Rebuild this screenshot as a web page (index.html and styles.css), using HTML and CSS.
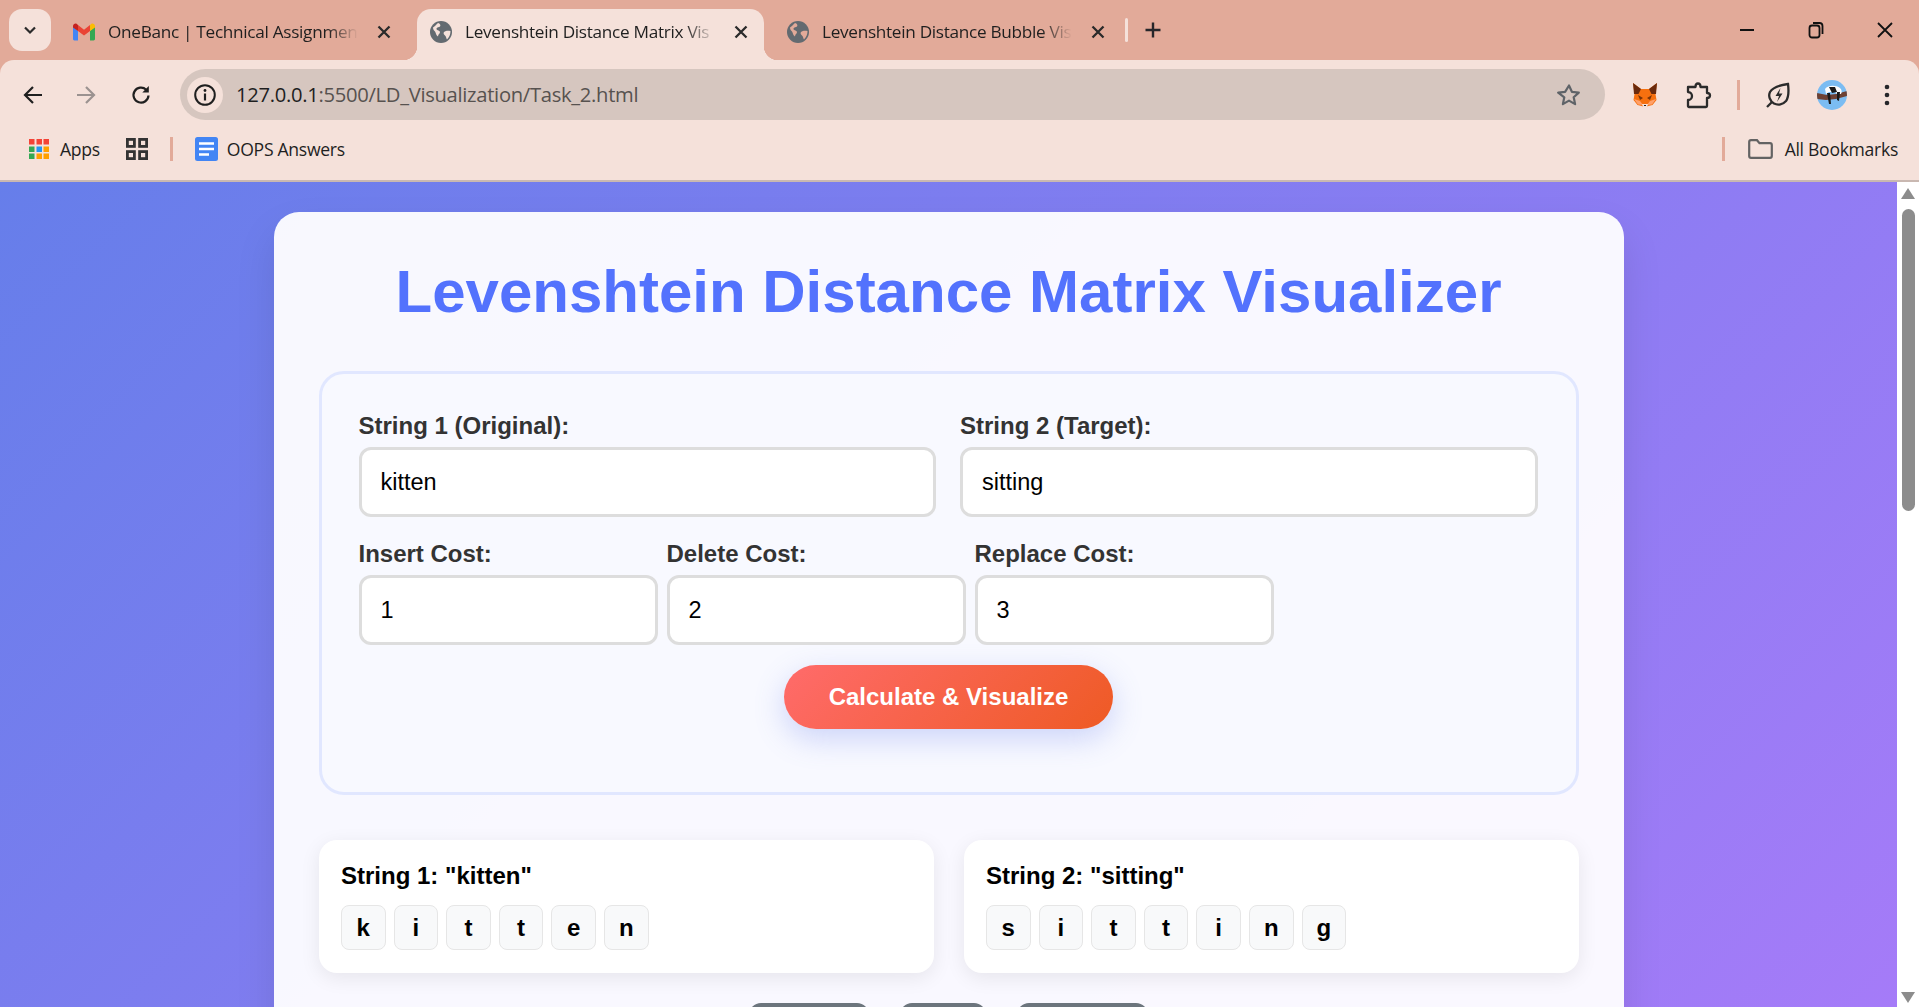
FILE: index.html
```html
<!DOCTYPE html>
<html>
<head>
    <meta charset="UTF-8">
    <title>Levenshtein Distance Matrix Visualizer</title>
    <link rel="stylesheet" href="styles.css">
</head>
<body>
<div class="chrome">
    <div class="tabstrip">
        <div class="tab-list">
            <svg width="16" height="16" viewBox="0 0 16 16"><path d="M3 5.500l5 5 5-5" fill="none" stroke="#2b2b2b" stroke-width="2.200"/></svg>
        </div>
        <div class="tab tab-first">
            <svg class="favicon" width="22" height="22" viewBox="0 0 22 22">
                <path d="M0 5.500v12.500c0 .8.6 1.400 1.400 1.400H5V10z" fill="#4285f4"/>
                <path d="M22 5.500v12.500c0 .8-.6 1.400-1.400 1.400H17V10z" fill="#34a853"/>
                <path d="M5 10l6 4.500 6-4.500V4l-6 4.800L5 4z" fill="#ea4335"/>
                <path d="M17 4v6l5-3.600V5c0-2-2.400-3-3.800-2z" fill="#fbbc04"/>
                <path d="M5 4v6L0 6.400V5c0-2 2.400-3 3.800-2z" fill="#c5221f"/>
            </svg>
            <span class="tab-title">OneBanc | Technical Assignmen</span>
            <svg class="tab-close" width="16" height="16" viewBox="0 0 16 16"><path d="M2.500 2.500l11 11M13.500 2.500l-11 11" stroke="#2a2a2a" stroke-width="2.300"/></svg>
        </div>
        <div class="tab tab-active">
            <svg class="favicon" width="22" height="22" viewBox="0 0 22 22">
                <circle cx="11" cy="11" r="11" fill="#636a70"/>
                <path d="M3 6.500c2-1 3-3 5-4.500 2 .5 3 2 2 3.500-1 1-3 .5-3.500 2-.5 2 3 1.500 3.500 3.500 0 2-2 2-2 4.500-2-1-2-3.500-3-5-1-1-2-2-2-4z" fill="#f5e1da"/>
                <path d="M14 11c2-1.500 4-1.500 6.500-1 0 3-1 6-3.500 8.500-1-1-.5-3-2-4-1-.8-2-2-1-3.500z" fill="#f5e1da"/>
            </svg>
            <span class="tab-title">Levenshtein Distance Matrix Vis</span>
            <svg class="tab-close" width="16" height="16" viewBox="0 0 16 16"><path d="M2.500 2.500l11 11M13.500 2.500l-11 11" stroke="#2a2a2a" stroke-width="2.300"/></svg>
        </div>
        <div class="tab tab-last">
            <svg class="favicon" width="22" height="22" viewBox="0 0 22 22">
                <circle cx="11" cy="11" r="11" fill="#636a70"/>
                <path d="M3 6.500c2-1 3-3 5-4.500 2 .5 3 2 2 3.500-1 1-3 .5-3.500 2-.5 2 3 1.500 3.500 3.500 0 2-2 2-2 4.500-2-1-2-3.500-3-5-1-1-2-2-2-4z" fill="#e2aa99"/>
                <path d="M14 11c2-1.500 4-1.500 6.500-1 0 3-1 6-3.500 8.500-1-1-.5-3-2-4-1-.8-2-2-1-3.500z" fill="#e2aa99"/>
            </svg>
            <span class="tab-title">Levenshtein Distance Bubble Vis</span>
            <svg class="tab-close" width="16" height="16" viewBox="0 0 16 16"><path d="M2.500 2.500l11 11M13.500 2.500l-11 11" stroke="#2a2a2a" stroke-width="2.300"/></svg>
        </div>
        <div class="tab-sep"></div>
        <svg class="new-tab" width="18" height="18" viewBox="0 0 18 18"><path d="M9 1.500v15M1.500 9h15" stroke="#26262a" stroke-width="2.400"/></svg>
        <div class="win-controls">
            <div class="win-btn"><svg width="16" height="16" viewBox="0 0 16 16"><path d="M1 8h14" stroke="#111" stroke-width="2"/></svg></div>
            <div class="win-btn"><svg width="16" height="18" viewBox="0 0 16 18"><rect x="1.500" y="4.500" width="10" height="12" rx="2.500" fill="none" stroke="#111" stroke-width="1.800"/><path d="M5 2h6.500c1.700 0 3 1.300 3 3v8" fill="none" stroke="#111" stroke-width="1.800"/></svg></div>
            <div class="win-btn"><svg width="18" height="18" viewBox="0 0 18 18"><path d="M2 2l14 14M16 2L2 16" stroke="#111" stroke-width="1.800"/></svg></div>
        </div>
    </div>

    <div class="toolbar">
        <div class="nav-btn nav-back"><svg width="22" height="22" viewBox="0 0 22 22"><path d="M20 11H3M11 3l-8 8 8 8" fill="none" stroke="#1f1f1f" stroke-width="2.200"/></svg></div>
        <div class="nav-btn nav-fwd"><svg width="22" height="22" viewBox="0 0 22 22"><path d="M2 11h17M11 3l8 8-8 8" fill="none" stroke="#9b9290" stroke-width="2.200"/></svg></div>
        <div class="nav-btn nav-reload"><svg width="22" height="22" viewBox="0 0 22 22"><path d="M18.500 11.500a7.500 7.500 0 1 1-2.300-5.800" fill="none" stroke="#1f1f1f" stroke-width="2.200"/><path d="M18.800 2v6.500h-6.500z" fill="#1f1f1f"/></svg></div>
        <div class="omnibox">
            <div class="site-info"><svg width="24" height="24" viewBox="0 0 24 24"><circle cx="12" cy="12" r="9.800" fill="none" stroke="#1f1f1f" stroke-width="2"/><path d="M12 10.500v7" stroke="#1f1f1f" stroke-width="2.200"/><circle cx="12" cy="7.500" r="1.400" fill="#1f1f1f"/></svg></div>
            <span class="url"><span class="url-host">127.0.0.1</span>:5500/LD_Visualization/Task_2.html</span>
            <svg class="star" width="24" height="24" viewBox="0 0 24 24"><path d="M12 2.500l2.900 6.300 6.900.8-5.100 4.700 1.400 6.800-6.100-3.500-6.100 3.500 1.400-6.800L1.200 9.600l6.900-.8z" fill="none" stroke="#5f6368" stroke-width="2.200" stroke-linejoin="round"/></svg>
        </div>
        <div class="ext-btn ext-fox">
            <svg width="26" height="26" viewBox="0 0 26 26">
                <path d="M1 1l8 6h8l8-6-1.500 11 1 6-4 5-4 1-3.500 1-3.500-1-4-1-4-5 1-6z" fill="#f6700f"/>
                <path d="M1 1l8 6-2.500 5-4.500 0zM25 1l-8 6 2.500 5 4.500 0z" fill="#6a2a0d"/>
                <path d="M6 13l5 3-3 2zM20 13l-5 3 3 2z" fill="#7a3408"/>
                <path d="M2 17l6 2 3 4-5-0.500zM24 17l-6 2-3 4 5-0.500z" fill="#ffa06a"/>
                <path d="M10 22h6l-1 3h-4z" fill="#f5e1da"/>
                <path d="M12 23h2v1h-2z" fill="#222"/>
            </svg>
        </div>
        <div class="ext-btn ext-puzzle">
            <svg width="26" height="28" viewBox="0 0 26 28"><path d="M2 6h7.500c0-2 .5-3.500 2.500-3.500s2.500 1.500 2.500 3.500H21v6c2 0 3 .8 3 2.500s-1 2.500-3 2.500V25c0 .6-.4 1-1 1H3c-.6 0-1-.4-1-1v-6c2.500 0 4-2 4-4s-1.500-4-4-4V6z" fill="none" stroke="#2b2b2b" stroke-width="2.300" stroke-linejoin="round"/></svg>
        </div>
        <div class="tool-sep"></div>
        <div class="ext-btn ext-leaf">
            <svg width="26" height="28" viewBox="0 0 26 28"><path d="M23 3c1 8 1 13-2 17-3 3.500-8 4.500-12 2.500C5 20 3 15 5 11c3-5 10-7 18-8z" fill="none" stroke="#2b2b2b" stroke-width="2.300"/><path d="M2 26l5-5" stroke="#2b2b2b" stroke-width="2.300"/><path d="M15.500 7l-5 8h3.500l-2 6 5.500-8.500H14z" fill="#2b2b2b"/></svg>
        </div>
        <div class="avatar">
            <svg width="30" height="30" viewBox="0 0 30 30">
                <clipPath id="avatar-clip"><circle cx="15" cy="15" r="15"/></clipPath>
                <g clip-path="url(#avatar-clip)">
                    <rect width="30" height="30" fill="#7bbcf2"/>
                    <path d="M0 13l10 2 9-1 11-3v5l-11 3-10 1L0 19z" fill="#6d4134"/>
                    <path d="M8 9c3-4 11-4 15-1 2 2 2 4 1 6l-4 0-2-2-6 0-3 2z" fill="#fdfdfd"/>
                    <path d="M12 7l6 0 2 5-5 1z" fill="#1a1a1a"/>
                    <path d="M10 13h3l1 11-2 0zM20 12l3 0-1 9-2-1z" fill="#1a1a1a"/>
                </g>
            </svg>
        </div>
        <svg class="menu-dots" width="6" height="22" viewBox="0 0 6 22"><circle cx="3" cy="3" r="2.300" fill="#26262a"/><circle cx="3" cy="11" r="2.300" fill="#26262a"/><circle cx="3" cy="19" r="2.300" fill="#26262a"/></svg>
    </div>

    <div class="bookmarks">
        <svg class="bm-apps" width="20" height="20" viewBox="0 0 20 20">
            <rect width="5.500" height="5.500" fill="#f44336"/><rect x="7.500" width="5.500" height="5.500" fill="#f44336"/><rect x="14.500" width="5.500" height="5.500" fill="#f44336"/>
            <rect y="7.500" width="5.500" height="5.500" fill="#34a853"/><rect x="7.500" y="7.500" width="5.500" height="5.500" fill="#2196f3"/><rect x="14.500" y="7.500" width="5.500" height="5.500" fill="#ffa000"/>
            <rect y="14.500" width="5.500" height="5.500" fill="#34a853"/><rect x="7.500" y="14.500" width="5.500" height="5.500" fill="#ffa000"/><rect x="14.500" y="14.500" width="5.500" height="5.500" fill="#ffa000"/>
        </svg>
        <span class="bm-label">Apps</span>
        <svg class="bm-tiles" width="22" height="22" viewBox="0 0 22 22">
            <g fill="none" stroke="#333" stroke-width="2.800"><rect x="1.400" y="1.400" width="7" height="7"/><rect x="13.600" y="1.400" width="7" height="7"/><rect x="1.400" y="13.600" width="7" height="7"/><rect x="13.600" y="13.600" width="7" height="7"/></g>
        </svg>
        <div class="bm-sep"></div>
        <svg class="bm-doc" width="23" height="24" viewBox="0 0 23 24"><rect width="23" height="24" rx="2.500" fill="#4285f4"/><path d="M4 6.500h15M4 12h15M4 17.500h10" stroke="#fff" stroke-width="2.400"/></svg>
        <span class="bm-label">OOPS Answers</span>
        <div class="bm-sep bm-sep-right"></div>
        <svg class="bm-folder" width="25" height="20" viewBox="0 0 25 20"><path d="M1.200 3c0-1 .8-1.800 1.800-1.800h6l2.500 3H22c1 0 1.800.8 1.800 1.800v11c0 1-.8 1.800-1.800 1.800H3c-1 0-1.800-.8-1.800-1.800z" fill="none" stroke="#636363" stroke-width="2.200"/></svg>
        <span class="bm-label">All Bookmarks</span>
    </div>
</div>

<div class="window">
    <div class="viewport">
        <div class="container">
            <h1 class="page-title">Levenshtein Distance Matrix Visualizer</h1>

            <div class="controls">
                <div class="row row-strings">
                    <div class="field">
                        <label>String 1 (Original):</label>
                        <input type="text" value="kitten">
                    </div>
                    <div class="field">
                        <label>String 2 (Target):</label>
                        <input type="text" value="sitting">
                    </div>
                </div>
                <div class="row row-costs">
                    <div class="field field-cost">
                        <label>Insert Cost:</label>
                        <input type="text" value="1">
                    </div>
                    <div class="field field-cost">
                        <label>Delete Cost:</label>
                        <input type="text" value="2">
                    </div>
                    <div class="field field-cost">
                        <label>Replace Cost:</label>
                        <input type="text" value="3">
                    </div>
                </div>
                <button class="calc-btn">Calculate &amp; Visualize</button>
            </div>

            <div class="strings">
                <div class="string-card">
                    <h3>String 1: "kitten"</h3>
                    <div class="letters">
                        <span class="letter">k</span><span class="letter">i</span><span class="letter">t</span><span class="letter">t</span><span class="letter">e</span><span class="letter">n</span>
                    </div>
                </div>
                <div class="string-card">
                    <h3>String 2: "sitting"</h3>
                    <div class="letters">
                        <span class="letter">s</span><span class="letter">i</span><span class="letter">t</span><span class="letter">t</span><span class="letter">i</span><span class="letter">n</span><span class="letter">g</span>
                    </div>
                </div>
            </div>

            <div class="actions">
                <span class="pill pill-a"></span>
                <span class="pill pill-b"></span>
                <span class="pill pill-c"></span>
            </div>
        </div>
    </div>
    <div class="scrollbar">
        <span class="arrow-up"></span>
        <span class="thumb"></span>
        <span class="arrow-down"></span>
    </div>
</div>
</body>
</html>
```

FILE: styles.css
```css
* {
    margin: 0;
    padding: 0;
    box-sizing: border-box;
}

html, body {
    width: 100%;
    height: 100%;
    overflow: hidden;
}

body {
    display: flex;
    flex-direction: column;
    font-family: "Liberation Sans", Arial, sans-serif;
}

/* browser frame */
.chrome {
    flex: none;
    background: #e2aa99;
    font-family: "Open Sans", "Noto Sans", sans-serif;
    color: #1f1f1f;
}

.tabstrip {
    display: flex;
    align-items: flex-start;
    height: 60px;
    padding-left: 9px;
}

.tab-list {
    display: flex;
    align-items: center;
    justify-content: center;
    flex: none;
    margin-top: 9px;
    width: 42px;
    height: 42px;
    border-radius: 13px;
    background: #f5e1da;
}

.tab {
    position: relative;
    display: flex;
    align-items: center;
    flex: none;
    margin-top: 9px;
    height: 51px;
    padding: 0 15px 6px 13px;
}

.tab-first {
    margin-left: 9px;
    padding-left: 13px;
    padding-right: 25px;
}

.tab-last {
    padding-left: 23px;
}

.tab-active {
    border-radius: 14px 14px 0 0;
    background: #f5e1da;
}

.tab-active::before,
.tab-active::after {
    content: "";
    position: absolute;
    bottom: 0;
    width: 14px;
    height: 14px;
}

.tab-active::before {
    left: -14px;
    background: radial-gradient(circle at 0 0, transparent 14px, #f5e1da 14.500px);
}

.tab-active::after {
    right: -14px;
    background: radial-gradient(circle at 100% 0, transparent 14px, #f5e1da 14.500px);
}

.favicon {
    flex: none;
    margin-right: 13px;
}

.tab-title {
    flex: none;
    width: 250px;
    overflow: hidden;
    white-space: nowrap;
    font-size: 17.200px;
    letter-spacing: -0.300px;
    -webkit-mask-image: linear-gradient(to right, #000 88%, transparent 100%);
    mask-image: linear-gradient(to right, #000 88%, transparent 100%);
}

.tab-close {
    flex: none;
    margin-left: 18px;
}

.tab-sep {
    flex: none;
    margin: 18px 0 0 4px;
    width: 3px;
    height: 24px;
    border-radius: 2px;
    background: #f5e1da;
}

.new-tab {
    flex: none;
    margin: 21px 0 0 16px;
}

.win-controls {
    display: flex;
    margin-left: auto;
}

.win-btn {
    display: flex;
    align-items: center;
    justify-content: center;
    width: 69px;
    height: 60px;
}

.toolbar {
    display: flex;
    align-items: center;
    height: 60px;
    padding-top: 9px;
    border-radius: 14px 14px 0 0;
    background: #f5e1da;
}

.nav-btn {
    display: flex;
    align-items: center;
    justify-content: center;
    flex: none;
    width: 22px;
}

.nav-back {
    margin-left: 22px;
}

.nav-fwd {
    margin-left: 31px;
}

.nav-reload {
    margin-left: 33px;
}

.omnibox {
    display: flex;
    align-items: center;
    flex: none;
    margin-left: 28px;
    width: 1425px;
    height: 51px;
    padding: 0 24px 0 7px;
    border-radius: 26px;
    background: #d6c6bf;
}

.site-info {
    display: flex;
    align-items: center;
    justify-content: center;
    flex: none;
    width: 36px;
    height: 36px;
    border-radius: 50%;
    background: #f5e1da;
}

.url {
    flex: 1;
    margin: 0 0 2px 13px;
    font-size: 20.200px;
    letter-spacing: -0.300px;
    color: #57524f;
    white-space: nowrap;
}

.url-host {
    color: #1f1f1f;
}

.star {
    flex: none;
}

.ext-btn {
    display: flex;
    align-items: center;
    justify-content: center;
    flex: none;
    width: 28px;
}

.ext-fox {
    margin-left: 26px;
}

.ext-puzzle {
    margin-left: 26px;
}

.tool-sep {
    flex: none;
    margin-left: 24px;
    width: 3px;
    height: 30px;
    background: #e2aa99;
}

.ext-leaf {
    margin-left: 24px;
}

.avatar {
    flex: none;
    display: flex;
    margin-left: 25px;
    width: 30px;
    height: 30px;
}

.menu-dots {
    flex: none;
    margin-left: 37px;
}

.bookmarks {
    display: flex;
    align-items: center;
    height: 62px;
    padding: 0 21px 2px 29px;
    border-bottom: 2px solid #c9b8b1;
    background: #f5e1da;
}

.bm-label {
    flex: none;
    font-size: 17.600px;
    letter-spacing: -0.300px;
    white-space: nowrap;
}

.bm-apps {
    flex: none;
    margin-right: 11px;
}

.bm-tiles {
    flex: none;
    margin-left: 26px;
}

.bm-sep {
    flex: none;
    margin: 0 22px 0 22px;
    width: 3px;
    height: 24px;
    background: #e2aa99;
}

.bm-sep-right {
    margin-left: auto;
    margin-right: 23px;
}

.bm-doc {
    flex: none;
    margin-right: 9px;
}

.bm-folder {
    flex: none;
    margin-right: 12px;
}

/* page */
.window {
    flex: 1;
    display: flex;
    min-height: 0;
}

.viewport {
    flex: 1;
    overflow: hidden;
    padding-top: 30px;
    background: linear-gradient(135deg, #667eea, #a57bf8);
}

.container {
    margin: 0 auto;
    width: 1350px;
    padding: 47px 45px 40px;
    border-radius: 25px;
    background: rgba(255, 255, 255, 0.95);
    box-shadow: 0 20px 40px rgba(0, 0, 0, 0.1);
}

.page-title {
    margin-bottom: 46px;
    font-size: 60px;
    line-height: 66px;
    font-weight: bold;
    text-align: center;
    color: #5372fd;
}

.controls {
    height: 424px;
    padding: 39px 37px 0;
    border: 3px solid #e1e7ff;
    border-radius: 25px;
    background: #f8f9ff;
}

.row {
    display: flex;
}

.row-strings {
    gap: 24px;
    padding-right: 1px;
}

.row-strings .field {
    flex: 1;
}

.row-costs {
    gap: 9px;
    margin-top: 24px;
}

.field-cost {
    width: 299px;
}

.field label {
    display: block;
    margin-bottom: 9px;
    font-size: 24px;
    line-height: 25px;
    font-weight: bold;
    color: #333;
}

.field input {
    display: block;
    width: 100%;
    height: 70px;
    padding: 0 19px;
    border: 3px solid #ddd;
    border-radius: 12px;
    background: #fff;
    font-family: "Liberation Sans", Arial, sans-serif;
    font-size: 23.500px;
    color: #000;
}

.calc-btn {
    display: block;
    margin: 20px auto 0;
    width: 329px;
    height: 64px;
    border: none;
    border-radius: 32px;
    background: linear-gradient(135deg, #ff6b6b, #ee5a24);
    box-shadow: 0 10px 30px rgba(102, 126, 234, 0.3);
    font-family: "Liberation Sans", Arial, sans-serif;
    font-size: 24px;
    font-weight: bold;
    color: #fff;
}

.strings {
    display: flex;
    gap: 30px;
    margin-top: 45px;
}

.string-card {
    flex: 1;
    height: 133px;
    padding: 22px 22.500px;
    border-radius: 18px;
    background: #fff;
    box-shadow: 0 5px 20px rgba(0, 0, 0, 0.08);
}

.string-card h3 {
    font-size: 24px;
    line-height: 28px;
    font-weight: bold;
    color: #000;
}

.letters {
    display: flex;
    gap: 8px;
    margin-top: 15px;
}

.letter {
    display: flex;
    align-items: center;
    justify-content: center;
    width: 44.600px;
    height: 45px;
    border: 1.500px solid #e6e6e6;
    border-radius: 8px;
    background: #f8f9fa;
    font-size: 24px;
    font-weight: bold;
    color: #000;
}

.actions {
    display: flex;
    justify-content: center;
    gap: 31px;
    margin-top: 30px;
}

.pill {
    height: 50px;
    border-radius: 12px;
    background: #6c757d;
}

.pill-a {
    width: 120px;
}

.pill-b {
    width: 86px;
}

.pill-c {
    width: 131px;
}

/* scrollbar */
.scrollbar {
    position: relative;
    flex: none;
    width: 22px;
    background: #fff;
}

.arrow-up,
.arrow-down {
    position: absolute;
    left: 4px;
    width: 0;
    height: 0;
    border-left: 7.500px solid transparent;
    border-right: 7.500px solid transparent;
}

.arrow-up {
    top: 6px;
    border-bottom: 11px solid #8c8c8c;
}

.arrow-down {
    bottom: 4px;
    border-top: 11px solid #8c8c8c;
}

.thumb {
    position: absolute;
    top: 27px;
    left: 5px;
    width: 13px;
    height: 302px;
    border-radius: 7px;
    background: #8c8c8c;
}
```
